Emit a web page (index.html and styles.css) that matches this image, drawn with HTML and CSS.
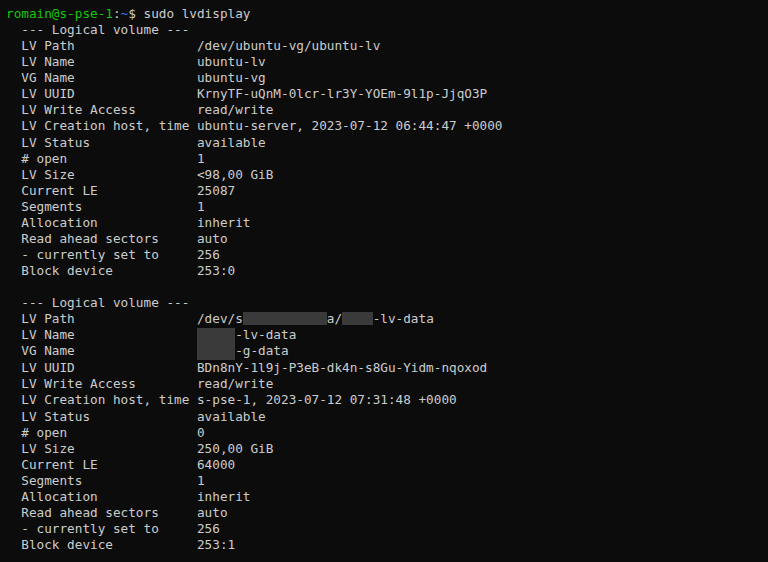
FILE: index.html
```html
<!DOCTYPE html>
<html>
<head>
<meta charset="utf-8">
<link rel="stylesheet" href="styles.css">
</head>
<body>
<pre class="term"><span class="user">romain@s-pse-1</span>:<span class="path">~</span>$ sudo lvdisplay
  --- Logical volume ---
  LV Path                /dev/ubuntu-vg/ubuntu-lv
  LV Name                ubuntu-lv
  VG Name                ubuntu-vg
  LV UUID                KrnyTF-uQnM-0lcr-lr3Y-YOEm-9l1p-JjqO3P
  LV Write Access        read/write
  LV Creation host, time ubuntu-server, 2023-07-12 06:44:47 +0000
  LV Status              available
  # open                 1
  LV Size                &lt;98,00 GiB
  Current LE             25087
  Segments               1
  Allocation             inherit
  Read ahead sectors     auto
  - currently set to     256
  Block device           253:0

  --- Logical volume ---
  LV Path                /dev/s<span class="redact r-path1">xxxxxxxxxxx</span>a/<span class="redact r-path2">xxxx</span>-lv-data
  LV Name                <span class="redact r-name r-top">xxxxx</span>-lv-data
  VG Name                <span class="redact r-name r-bot">xxxxx</span>-g-data
  LV UUID                BDn8nY-1l9j-P3eB-dk4n-s8Gu-Yidm-nqoxod
  LV Write Access        read/write
  LV Creation host, time s-pse-1, 2023-07-12 07:31:48 +0000
  LV Status              available
  # open                 0
  LV Size                250,00 GiB
  Current LE             64000
  Segments               1
  Allocation             inherit
  Read ahead sectors     auto
  - currently set to     256
  Block device           253:1
</pre>
</body>
</html>
```
FILE: styles.css
```css
html, body {
  margin: 0;
  padding: 0;
  background: #0c0c0c;
  height: 100%;
}
.term {
  margin: 0;
  padding: 6px 0 0 6px;
  font-family: "DejaVu Sans Mono", "Liberation Mono", monospace;
  font-size: 12.7px;
  line-height: 16.06px;
  color: #cccccc;
  white-space: pre;
}
.user {
  color: #16c60c;
}
.path {
  color: #3b78ff;
}
.redact {
  display: inline-block;
  color: transparent;
  background: #3a3a3a;
  vertical-align: top;
}
.r-path1 {
  height: 13px;
  margin-top: 1px;
}
.r-path2 {
  height: 13px;
  margin-top: 1px;
}
.r-name {
  height: 16px;
}
.r-top {
  height: 15px;
  margin-top: 1px;
}
.r-bot {
  height: 17px;
}
```
